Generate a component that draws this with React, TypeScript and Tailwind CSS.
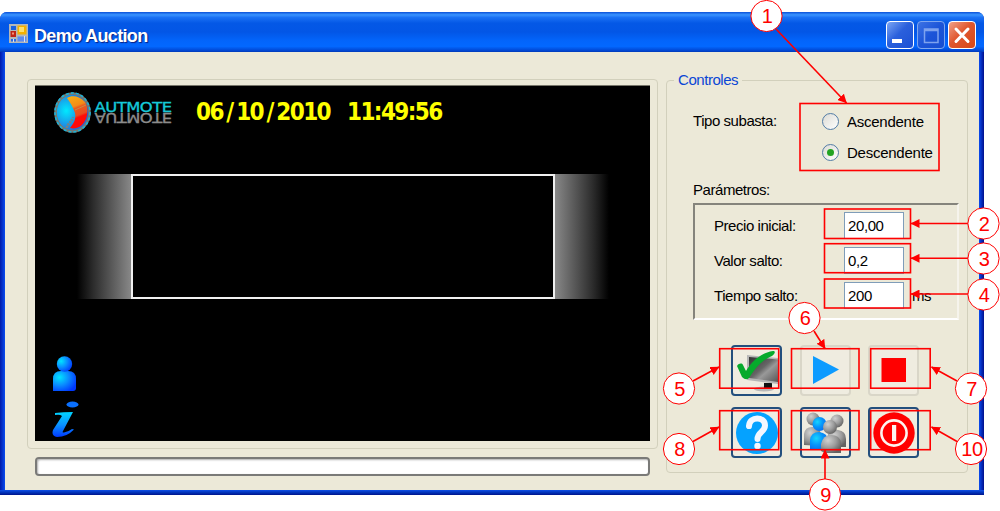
import { useState } from "react";

const callouts = [
  { n: 1, cx: 766.5, cy: 16, box: [800, 103.5, 139, 67], from: [776, 29], to: [846.5, 103] },
  { n: 2, cx: 983.5, cy: 223.5, box: [824.5, 209, 86, 29.5], from: [968, 223.5], to: [911, 223.5] },
  { n: 3, cx: 983.5, cy: 258.5, box: [824.5, 243.7, 86, 29], from: [968, 258.3], to: [911, 258.3] },
  { n: 4, cx: 983.5, cy: 294.5, box: [824.5, 279, 86, 29], from: [968, 294], to: [911, 294] },
  { n: 5, cx: 679, cy: 388.5, box: [719.7, 348.7, 59, 39.5], from: [693, 381], to: [719, 367] },
  { n: 6, cx: 804.5, cy: 318, box: [791.5, 348.7, 67.5, 39.5], from: [814, 331], to: [825, 348.5] },
  { n: 7, cx: 971, cy: 388.5, box: [870.7, 348.7, 59.5, 39.5], from: [957, 381], to: [931.5, 367] },
  { n: 8, cx: 679, cy: 449, box: [719.7, 410.7, 59, 39], from: [693, 441.5], to: [719, 427] },
  { n: 9, cx: 825, cy: 494.5, box: [791.5, 410.7, 67.5, 39], from: [825, 479], to: [825, 450] },
  { n: 10, cx: 971, cy: 449, box: [870.7, 410.7, 59.5, 39], from: [957, 441.5], to: [931.5, 427] },
];

function Callouts() {
  return (
    <svg className="pointer-events-none absolute left-0 top-0" width="1000" height="511" viewBox="0 0 1000 511">
      <defs>
        <marker id="arrow" markerUnits="userSpaceOnUse" markerWidth="9" markerHeight="9" refX="8.5" refY="4.5" orient="auto">
          <path d="M0 0L9 4.5L0 9Z" fill="#f00" />
        </marker>
      </defs>
      {callouts.map((c) => (
        <g key={c.n} stroke="#f00" fill="none">
          <rect x={c.box[0]} y={c.box[1]} width={c.box[2]} height={c.box[3]} strokeWidth="1.6" />
          <line x1={c.from[0]} y1={c.from[1]} x2={c.to[0]} y2={c.to[1]} strokeWidth="1.6" markerEnd="url(#arrow)" />
          <circle cx={c.cx} cy={c.cy} r="15.6" fill="#fff" strokeWidth="1" />
          <text x={c.cx + (c.n === 10 ? 1 : 0.7)} y={c.cy + 7.3} fill="#f00" stroke="none" fontSize="20" textAnchor="middle" fontFamily="Liberation Sans, sans-serif">
            {c.n}
          </text>
        </g>
      ))}
    </svg>
  );
}

function Logo() {
  return (
    <svg width="122" height="44" viewBox="0 0 122 44">
      <defs>
        <radialGradient id="globe" cx="30%" cy="45%" r="75%">
          <stop offset="0" stopColor="#00eaff" />
          <stop offset="0.5" stopColor="#1a9ae8" />
          <stop offset="1" stopColor="#2353d0" />
        </radialGradient>
        <linearGradient id="fire" x1="0" y1="0" x2="0.25" y2="1">
          <stop offset="0" stopColor="#fbb010" />
          <stop offset="0.38" stopColor="#f28c18" />
          <stop offset="0.45" stopColor="#ea5a1e" />
          <stop offset="0.68" stopColor="#e84c20" />
          <stop offset="0.75" stopColor="#ff0c08" />
          <stop offset="1" stopColor="#ff0808" />
        </linearGradient>
      </defs>
      <ellipse cx="19.5" cy="21.5" rx="18.3" ry="20.3" fill="#76786f" />
      <ellipse cx="19.5" cy="21.5" rx="17.5" ry="19.5" fill="none" stroke="#16b4dc" strokeWidth="1.6" strokeDasharray="3 2" />
      <ellipse cx="19.5" cy="21.5" rx="15.7" ry="17.7" fill="url(#globe)" />
      <path d="M14 7C19 4 27 5 32 11C36 17 35 28 29 34C26 37 21 38 17 37C22 31 23 27 22 22C20 16 17 11 14 7Z" fill="url(#fire)" />
      <path d="M22 19L33 14" stroke="#c98a45" strokeWidth="1" />
      <path d="M14 37C14 32 18 33 20 26" fill="none" stroke="#7b837f" strokeWidth="2.5" strokeDasharray="2 1" />
      <text x="41.5" y="20.5" fill="#15c9d8" stroke="#15c9d8" strokeWidth="0.35" fontSize="14" textLength="77" lengthAdjust="spacingAndGlyphs" fontFamily="DejaVu Sans, sans-serif">
        AUTMOTE
      </text>
      <g transform="translate(0 42) scale(1 -1)" aria-hidden="true">
        <text x="41.5" y="20.5" fill="#8b8b8b" stroke="#8b8b8b" strokeWidth="0.35" fontSize="14" textLength="77" lengthAdjust="spacingAndGlyphs" fontFamily="DejaVu Sans, sans-serif">
          AUTMOTE
        </text>
      </g>
    </svg>
  );
}

function UserIcon() {
  return (
    <svg width="25" height="36" viewBox="0 0 25 36">
      <defs>
        <radialGradient id="usr" cx="28%" cy="32%" r="80%">
          <stop offset="0" stopColor="#00e4ff" />
          <stop offset="0.5" stopColor="#0a8cff" />
          <stop offset="1" stopColor="#0038ff" />
        </radialGradient>
      </defs>
      <path d="M1 35V23Q1 15 9 15H16Q24 15 24 23V32Q24 35 21 35Z" fill="url(#usr)" />
      <circle cx="12.5" cy="8" r="7.7" fill="url(#usr)" />
    </svg>
  );
}

function InfoIcon() {
  return (
    <svg width="28" height="37" viewBox="0 0 28 37">
      <defs>
        <linearGradient id="info" x1="0" y1="0" x2="0" y2="1">
          <stop offset="0" stopColor="#00d4ff" />
          <stop offset="0.5" stopColor="#0a94ff" />
          <stop offset="1" stopColor="#0038ff" />
        </linearGradient>
      </defs>
      <ellipse cx="20.5" cy="3.5" rx="6" ry="3" fill="#0a70ff" />
      <path d="M3 12Q11 11 21 11L11 30Q10 32 12 31.5Q16 31 20 28L22 28.5Q15 36 5 36Q-1 35 1 29L10 15Q8 13 3 14Z" fill="url(#info)" />
    </svg>
  );
}

function MonitorIcon() {
  return (
    <svg width="44" height="44" viewBox="0 0 44 44">
      <defs>
        <linearGradient id="mon" x1="0" y1="0" x2="1" y2="1">
          <stop offset="0" stopColor="#333" />
          <stop offset="0.45" stopColor="#666" />
          <stop offset="0.6" stopColor="#999" />
          <stop offset="1" stopColor="#555" />
        </linearGradient>
      </defs>
      <ellipse cx="29" cy="40" rx="10" ry="2.5" fill="#b8b8b8" />
      <path d="M29 34H37V39H29Z" fill="#111" />
      <path d="M12 6L43 9V35L12 31Z" fill="#b6b6b6" />
      <path d="M14 8L43 10.5V33L14 29Z" fill="url(#mon)" />
      <path d="M2 17C4 14 7 14 8 16L11 22C17 12 26 4 38 2C41 2 40 5 37 7C27 11 20 19 14 29Q11 32 7 28Z" fill="#06aa2c" />
    </svg>
  );
}

function PeopleIcon() {
  return (
    <svg width="44" height="44" viewBox="0 0 44 44">
      <defs>
        <radialGradient id="grey" cx="35%" cy="30%" r="75%">
          <stop offset="0" stopColor="#d0d0d0" />
          <stop offset="0.55" stopColor="#9c9c9c" />
          <stop offset="1" stopColor="#626262" />
        </radialGradient>
        <radialGradient id="blue" cx="35%" cy="35%" r="75%">
          <stop offset="0" stopColor="#16d5ff" />
          <stop offset="0.5" stopColor="#0795fa" />
          <stop offset="1" stopColor="#0869ee" />
        </radialGradient>
      </defs>
      <g fill="url(#grey)">
        <path d="M1 34V23Q2 16 9 16Q17 16 18 24V35Z" />
        <circle cx="10" cy="8" r="6.5" />
        <path d="M25 36V23Q28 18 35 19Q43 20 43 28V36Z" />
        <circle cx="34" cy="10" r="6.5" />
      </g>
      <g fill="url(#blue)">
        <path d="M7 39V29Q8 21 16 21Q25 22 25 30V39Z" />
        <circle cx="16.5" cy="13" r="7" />
      </g>
      <g fill="url(#grey)">
        <path d="M18 40V33Q20 24 28 24Q37 24 38 32V42H22Z" />
        <circle cx="27" cy="16" r="7" />
      </g>
    </svg>
  );
}

function HelpIcon() {
  return (
    <svg width="44" height="44" viewBox="0 0 44 44">
      <circle cx="22" cy="22" r="21" fill="#05a2ff" />
      <path d="M14 15C14.500 5 30 5 30 14.500C30 21 22.500 21 22.500 28" fill="none" stroke="#f4f7ff" strokeWidth="6" strokeLinecap="round" />
      <circle cx="22.500" cy="35" r="3.200" fill="#f4f7ff" />
    </svg>
  );
}

function PowerIcon() {
  return (
    <svg width="44" height="44" viewBox="0 0 44 44">
      <circle cx="22" cy="22" r="20.7" fill="#f00" />
      <circle cx="22" cy="22" r="12.600" fill="none" stroke="#fdf4f0" strokeWidth="2.600" />
      <rect x="20" y="14" width="4.200" height="16" fill="#fdf4f0" />
    </svg>
  );
}

function PlayIcon() {
  return (
    <svg width="44" height="44" viewBox="0 0 44 44">
      <path d="M10 7L36 20.500L10 35Z" fill="#0d9bff" />
    </svg>
  );
}

function StopIcon() {
  return (
    <svg width="44" height="44" viewBox="0 0 44 44">
      <rect x="9.500" y="9" width="24.500" height="24" fill="#f00" />
    </svg>
  );
}

const buttons = [
  { label: "Conectar", icon: <MonitorIcon />, disabled: false },
  { label: "Iniciar", icon: <PlayIcon />, disabled: true },
  { label: "Parar", icon: <StopIcon />, disabled: true },
  { label: "Ayuda", icon: <HelpIcon />, disabled: false },
  { label: "Usuarios", icon: <PeopleIcon />, disabled: false },
  { label: "Salir", icon: <PowerIcon />, disabled: false },
];

function TitleBar() {
  return (
    <div className="flex h-10 shrink-0 items-center rounded-t-[7px] bg-[linear-gradient(180deg,#0a50d8_0%,#3a94ff_7%,#1a70f4_14%,#0458e6_28%,#0356e6_50%,#0365fb_72%,#0368ff_86%,#0148d4_96%,#013ab8_100%)] pl-[9px] pr-2">
      <svg className="mt-[3px]" width="19" height="19" viewBox="0 0 19 19">
        <rect width="19" height="19" fill="#b4b7b9" />
        <rect x="2" y="2" width="5" height="4" fill="#1a62e0" />
        <rect x="8.500" y="1.500" width="9" height="9" fill="#f4b000" />
        <rect x="10" y="3" width="5" height="5" fill="#ffe06c" />
        <rect x="1.500" y="7" width="5.500" height="6" fill="#c02414" />
        <rect x="3" y="8.500" width="2" height="2" fill="#f2947c" />
        <rect x="2" y="15" width="5" height="2.500" fill="#2466e8" />
        <rect x="8.500" y="12.500" width="9" height="5" fill="#5b8bf0" />
        <path d="M4.500 15V18M15.500 12V18" stroke="#dbe2f0" />
      </svg>
      <h1 className="ml-[6px] mt-[7px] whitespace-nowrap text-[18px] font-bold leading-none tracking-[-0.65px] text-white [text-shadow:1px_1px_1px_#0a1f80]">Demo Auction</h1>
      <div className="ml-auto mt-[5px] flex gap-[3px]">
        <button aria-label="Minimizar" className="h-7 w-7 rounded-[4px] border border-white bg-[linear-gradient(135deg,#7ca6f4,#2b60dc_45%,#1b50d4)]">
          <svg width="26" height="26" viewBox="0 0 26 26"><rect x="5" y="17" width="10" height="4" fill="#fff" /></svg>
        </button>
        <button aria-label="Maximizar" disabled className="h-7 w-7 rounded-[4px] border border-[#7fa6ee] bg-[linear-gradient(135deg,#3c72e4,#1c54d8_50%,#174ed0)]">
          <svg width="26" height="26" viewBox="0 0 26 26"><path d="M6.500 7H20V20.500H6.500ZM6.500 8.500H20" fill="none" stroke="#7ea2ee" strokeWidth="1.500" /></svg>
        </button>
        <button aria-label="Cerrar" className="h-7 w-7 rounded-[4px] border border-white bg-[linear-gradient(135deg,#f0a28a,#e0572f_45%,#d84816)]">
          <svg width="26" height="26" viewBox="0 0 26 26"><path d="M7 7L19 19.500M19 7L7 19.500" stroke="#fff" strokeWidth="3" strokeLinecap="round" /></svg>
        </button>
      </div>
    </div>
  );
}

function Display() {
  return (
    <section className="h-[370px] w-[631px] rounded-[4px] border border-[#d2d0bc] p-[5px] pl-[7px]">
      <div className="h-[356px] w-[615px] border-t border-[#77766a] bg-black">
        <div className="flex pl-[18px] pt-[5px]">
          <Logo />
          <p className="ml-[21px] mt-[7px] flex whitespace-pre font-['DejaVu_Sans_Condensed','DejaVu_Sans',sans-serif] text-[24px] font-bold leading-7 tracking-[-1.6px] text-[#ff0] [font-stretch:condensed]">
            <span>06<span className="px-[3.500px]">/</span>10<span className="px-[3.500px]">/</span>2010</span>
            <span className="ml-[17px]">11:49:56</span>
          </p>
        </div>
        <div className="mt-[39px] flex h-[125px] pl-[42px]">
          <div className="w-[54px] bg-[linear-gradient(90deg,#000,#2c2c2c_30%,#888)]" />
          <div className="w-[424px] border-2 border-[#f0f0f0] bg-black" />
          <div className="w-[54px] bg-[linear-gradient(270deg,#000,#2c2c2c_30%,#888)]" />
        </div>
        <div className="mt-[57px] flex flex-col gap-[9px] pl-[17px]">
          <UserIcon />
          <InfoIcon />
        </div>
      </div>
    </section>
  );
}

function Radio({ label, checked, onChange }: { label: string; checked: boolean; onChange: () => void }) {
  return (
    <label className="flex h-[31px] items-center gap-2">
      <input type="radio" name="tipo" className="sr-only" checked={checked} onChange={onChange} />
      <span className="flex h-[17px] w-[17px] items-center justify-center rounded-full border-[1.500px] border-[#527ca6] bg-linear-to-br from-[#dcdbd4] to-white">
        {checked && <span className="h-[7px] w-[7px] rounded-full bg-[#22a322]" />}
      </span>
      <span className="tracking-[-0.25px]">{label}</span>
    </label>
  );
}

function Field({ label, value, unit }: { label: string; value: string; unit?: string }) {
  return (
    <div className="flex h-[35px] items-center">
      <label className="w-[130px] whitespace-nowrap">{label}</label>
      <input aria-label={label} defaultValue={value} className="h-[27px] w-[60px] border border-[#7f9db9] bg-white pl-[3px] tracking-[-0.4px]" />
      {unit && <span className="ml-2">{unit}</span>}
    </div>
  );
}

function Controls() {
  const [tipo, setTipo] = useState("Descendente");

  return (
    <fieldset className="h-[401px] w-[302px] rounded-[4px] border border-[#d2d0bc] pl-[26px]">
      <legend className="-ml-[19px] px-1 leading-4 text-[#0a46d5]">Controles</legend>
      <div className="mt-[18px] flex">
        <span className="w-[129px] pt-[5px]">Tipo subasta:</span>
        <div>
          {["Ascendente", "Descendente"].map((t) => (
            <Radio key={t} label={t} checked={tipo === t} onChange={() => setTipo(t)} />
          ))}
        </div>
      </div>
      <p className="mt-[12px] leading-5">Parámetros:</p>
      <div className="mt-[3px] h-[117px] w-[266px] border-2 border-b-white border-l-[#85847c] border-r-[#f6f4ec] border-t-[#85847c] pl-[19px] pt-[3px]">
        <Field label="Precio inicial:" value="20,00" />
        <Field label="Valor salto:" value="0,2" />
        <Field label="Tiempo salto:" value="200" unit="ms" />
      </div>
      <div className="ml-[38px] mt-[25px] grid w-[188px] grid-cols-3 gap-x-[17.5px] gap-y-[11px]">
        {buttons.map((b) => (
          <button
            key={b.label}
            aria-label={b.label}
            disabled={b.disabled}
            className={
              "flex h-[51px] w-[51px] items-center justify-center rounded-[4px] bg-[#efece0] " +
              (b.disabled ? "border-2 border-[#d9d6c8]" : "border-2 border-[#234f7d]")
            }
          >
            {b.icon}
          </button>
        ))}
      </div>
    </fieldset>
  );
}

export default function App() {
  return (
    <div className="relative h-[511px] w-[1000px] overflow-hidden bg-white pt-3 font-['Liberation_Sans',Arial,sans-serif] text-[15px] leading-5 tracking-[-0.45px] text-black">
      <div className="flex h-[483px] w-[984px] flex-col rounded-t-[7px] bg-[linear-gradient(90deg,#0019a8_0,#0a4cf0_5px,#0a4cf0_979px,#00108c_984px)]">
        <TitleBar />
        <div className="mx-[5px] flex h-[438px] shrink-0 bg-[#ece9d8] pl-[22px]">
          <div className="pt-[27px]">
            <Display />
            <div className="ml-2 mt-2 h-[19px] w-[615px] rounded-[4px] border-2 border-[#7a7a78] bg-white shadow-[inset_1px_1px_2px_#b0b0b0]" />
          </div>
          <div className="ml-[8px] pt-5">
            <Controls />
          </div>
        </div>
        <div className="h-[5px] w-full bg-linear-to-b from-[#1050e8] to-[#00128c]" />
      </div>
      <Callouts />
    </div>
  );
}
